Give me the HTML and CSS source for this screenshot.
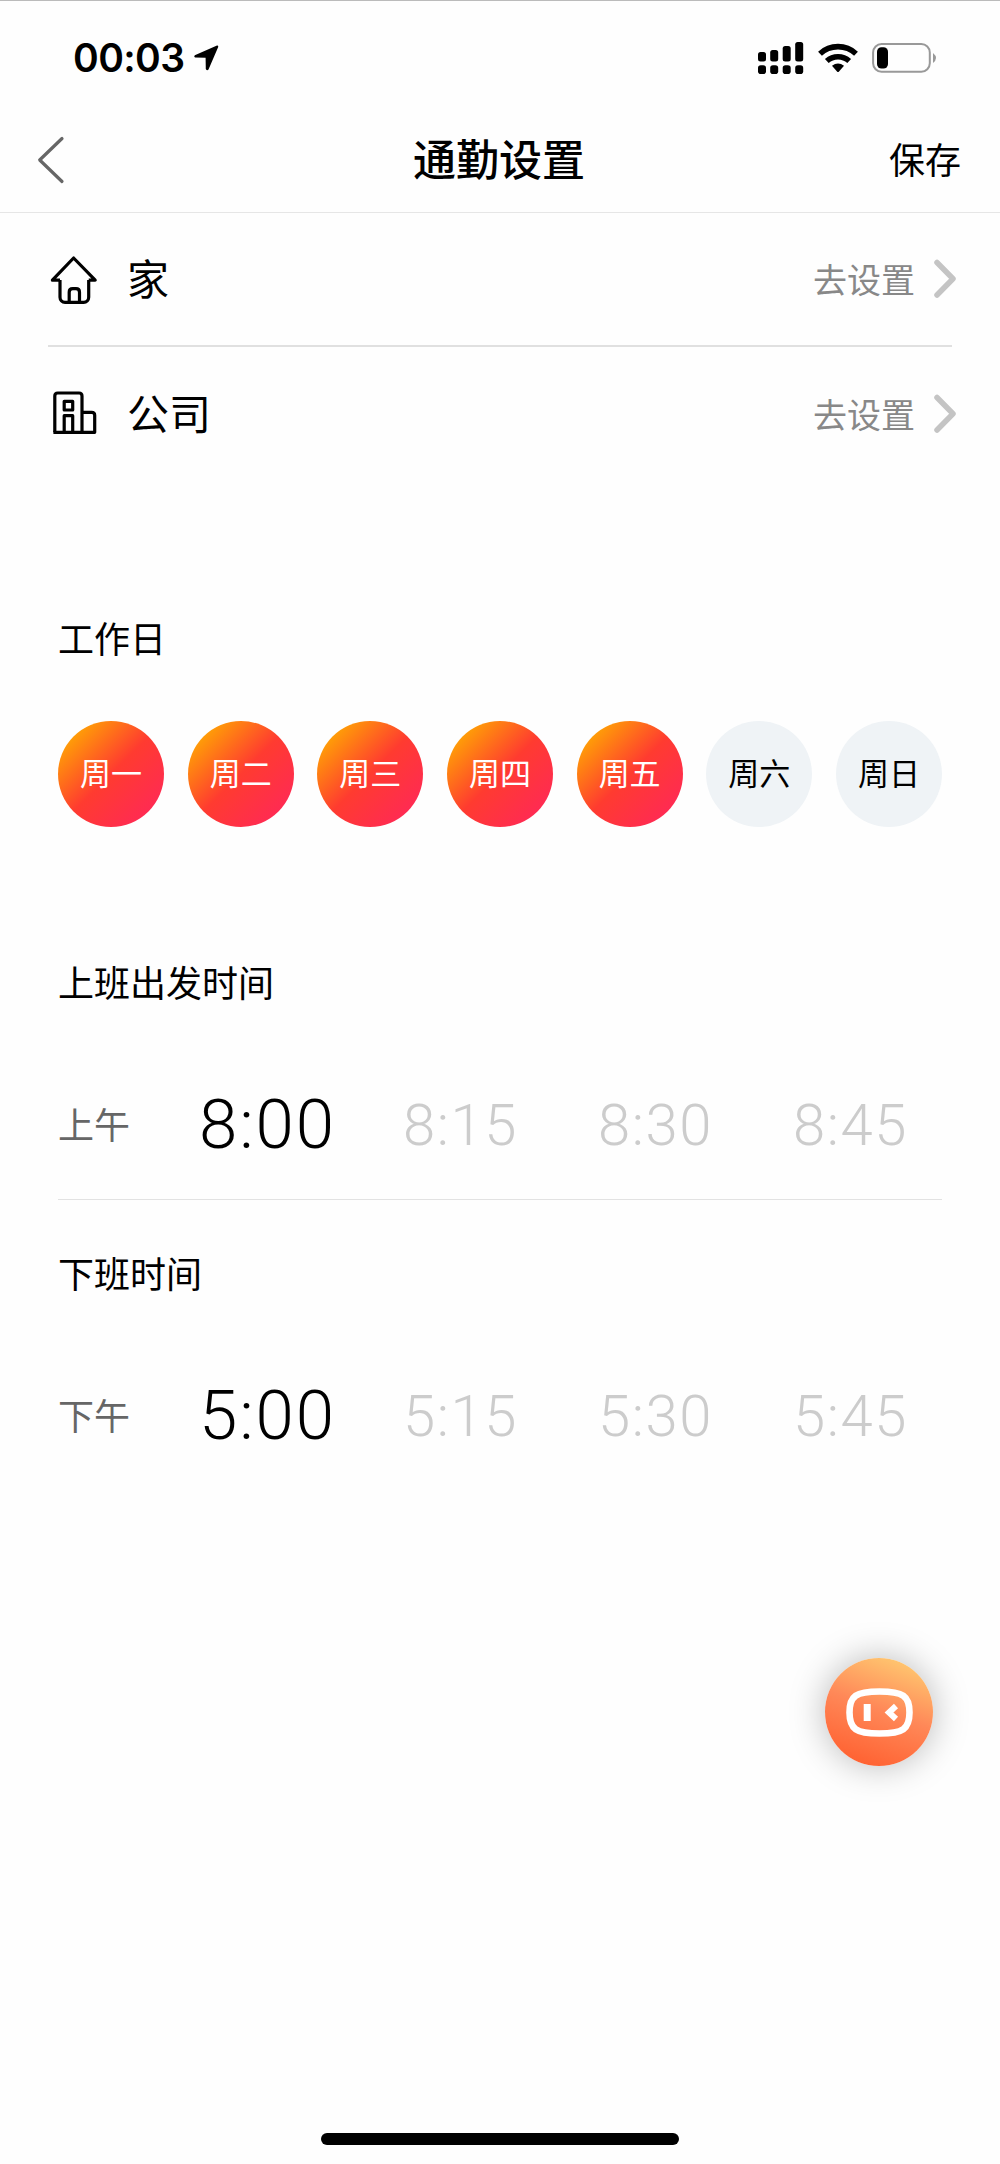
FILE: index.html
```
<!DOCTYPE html>
<html lang="zh-CN">
   <head>
      <meta charset="utf-8" />
      <title>通勤设置</title>
      <link rel="stylesheet" href="styles.css">
   </head>
   <body>
      <div class="status">
         <span class="clock">00:03</span>
         <svg class="location" width="26" height="28" viewBox="0 0 26 28"><path d="M24 1.5L1.8 11.2Q.5 12.5 2 13.6L12.6 13.8 12.8 25Q14 27.2 15.5 25.6L25.2 3Q25.5 1 24 1.5Z"/></svg>
         <svg class="signals" width="182" height="40" viewBox="0 0 182 40">
            <rect x="2" y="14" width="8" height="9.5" rx="2.5"/>
            <rect x="14.2" y="12" width="8" height="11.5" rx="2.5"/>
            <rect x="26.7" y="8" width="8" height="15.5" rx="2.5"/>
            <rect x="39.2" y="4" width="8" height="19.5" rx="2.5"/>
            <rect x="2" y="27.3" width="8" height="8.7" rx="2.8"/>
            <rect x="14.2" y="27.3" width="8" height="8.7" rx="2.8"/>
            <rect x="26.7" y="27.3" width="8" height="8.7" rx="2.8"/>
            <rect x="39.2" y="27.3" width="8" height="8.7" rx="2.8"/>
            <g fill="none" stroke="#000" stroke-width="5.6">
               <path d="M64 15.7A26.3 26.3 0 0 1 100 15.7"/>
               <path d="M70.8 23A16.8 16.8 0 0 1 93.2 23"/>
            </g>
            <path d="M76 27.8Q82 23.2 88 27.8L83 33.4Q82 34.5 81 33.4Z"/>
            <rect x="117.1" y="6" width="56.7" height="27.8" rx="8.5" fill="none" stroke="#999" stroke-width="2"/>
            <rect x="121" y="9.2" width="11" height="21.3" rx="4.5"/>
            <path d="M177 15Q183 20 177 25Z" fill="#999"/>
         </svg>
      </div>
      <header class="nav">
         <svg class="back" width="28" height="50" viewBox="0 0 28 50"><path d="M25 3.5L2.7 25 25 46.5"/></svg>
         <h1>通勤设置</h1>
         <span class="save">保存</span>
      </header>
      <main>
         <div class="place line">
            <svg class="icon" width="52" height="52" viewBox="0 0 52 52">
               <path d="M12 27.2H4.4L25.6 5 47.2 27.2H40.7"/>
               <path d="M12 27V44.3a5 5 0 0 0 5 5H35.7a5 5 0 0 0 5-5V27"/>
               <path d="M21.2 49V39.2q0-3.5 3.5-3.5h3.3q3.5 0 3.5 3.5V49"/>
            </svg>
            <span class="name">家</span>
            <span class="go">去设置</span>
            <svg class="arrow" width="24" height="42" viewBox="0 0 24 42"><path d="M4 4.5L20 20.8 4 37"/></svg>
         </div>
         <div class="place">
            <svg class="icon" width="52" height="52" viewBox="0 0 52 52">
               <path d="M6.8 44.3V8q0-3 3-3H31q3 0 3 3V44.3"/>
               <path d="M34 24.3h9.7q3 0 3 3V44.3H5.4"/>
               <path d="M16.2 13.3h8.5V22h-8.5z"/>
               <path d="M16.2 44V27.7h8.5V44"/>
            </svg>
            <span class="name">公司</span>
            <span class="go">去设置</span>
            <svg class="arrow" width="24" height="42" viewBox="0 0 24 42"><path d="M4 4.5L20 20.8 4 37"/></svg>
         </div>
         <section class="workdays">
            <h2>工作日</h2>
            <div class="days">
               <span class="day on">周一</span>
               <span class="day on">周二</span>
               <span class="day on">周三</span>
               <span class="day on">周四</span>
               <span class="day on">周五</span>
               <span class="day">周六</span>
               <span class="day">周日</span>
            </div>
         </section>
         <section class="leave line">
            <h2>上班出发时间</h2>
            <div class="times">
               <span class="half">上午</span>
               <span class="time now">8:00</span>
               <span class="time">8:15</span>
               <span class="time">8:30</span>
               <span class="time">8:45</span>
            </div>
         </section>
         <section class="off">
            <h2>下班时间</h2>
            <div class="times">
               <span class="half">下午</span>
               <span class="time now">5:00</span>
               <span class="time">5:15</span>
               <span class="time">5:30</span>
               <span class="time">5:45</span>
            </div>
         </section>
      </main>
      <div class="robot">
         <svg width="108" height="108" viewBox="0 0 108 108">
            <path d="M54.5 33.5C78 33.5 84.5 38 84.5 54.5S78 75.5 54.5 75.5 24.5 71 24.5 54.5 31 33.5 54.5 33.5Z" fill="none" stroke="#fff" stroke-width="6.6"/>
            <path d="M38.7 46h7v17h-7z" fill="#fff"/>
            <path d="M71 48L64 54.5 71 61" fill="none" stroke="#fff" stroke-width="6"/>
         </svg>
      </div>
      <div class="homebar"></div>
   </body>
</html>
```
FILE: styles.css
```
* {box-sizing: border-box;}
body {
   position: relative;
   width: 1000px;
   height: 2164px;
   margin: 0;
   overflow: hidden;
   background: #fefefe;
   color: #000;
   font-family: "Liberation Sans", "Noto Sans CJK SC", sans-serif;
}
svg {display: block; flex: none;}
h1, h2 {margin: 0; font-weight: 400;}

.status {
   display: flex;
   align-items: center;
   height: 114px;
   padding: 0 62px 0 73px;
   border-top: 1px solid #bbb;
}
.clock {font: 600 39px/40px Inter, sans-serif; letter-spacing: -.6px;}
.location {margin-left: 9px;}
.signals {margin-left: auto;}

.nav {
   display: grid;
   grid-template-columns: 1fr auto 1fr;
   align-items: center;
   height: 99px;
   padding: 0 39px 6px 37px;
   border-bottom: 1px solid #e6e6e6;
}
.back path {fill: none; stroke: #666; stroke-width: 3.2; stroke-linecap: round; stroke-linejoin: round;}
.nav h1 {padding-top: 2px; font-size: 43px; font-weight: 500; line-height: 60px;}
.save {justify-self: end; padding-top: 4px; font-size: 36px; line-height: 60px;}

.place {
   display: flex;
   align-items: center;
   height: 134px;
   margin: 0 43px 0 48px;
}
.place.line {
   border-bottom: 2px solid #e0e0e0;
   margin-right: 48px;
}
.place.line .arrow {margin-right: -5px;}
.icon path {fill: none; stroke: #000; stroke-width: 3.2; stroke-linejoin: round;}
.name {margin-left: 27px; padding-bottom: 5px; font-size: 42px;}
.go {margin-left: auto; padding-bottom: 2px; font-size: 34px; color: #888;}
.arrow {margin-left: 18px;}
.arrow path {fill: none; stroke: #c4c4c4; stroke-width: 5.5; stroke-linecap: round; stroke-linejoin: round;}

section {margin: 0 58px;}
h2 {padding-top: 2px; font-size: 36px; line-height: 50px;}
.workdays {padding-top: 133px;}
.days {
   display: flex;
   justify-content: space-between;
   margin-top: 55px;
}
.day {
   width: 106px;
   height: 106px;
   border-radius: 50%;
   background: #eff3f6;
   font-size: 31px;
   line-height: 108px;
   text-align: center;
}
.day.on {
   background: linear-gradient(135deg, #ffae00 8%, #ff3b30 50%, #ff2858 92%);
   color: #fff;
}

.leave {padding-top: 131px;}
.leave.line {padding-bottom: 25px; border-bottom: 1px solid #e2e2e2;}
.off {padding-top: 49px;}
.times {
   display: grid;
   grid-template-columns: 141px 204px 195px 195px auto;
   align-items: center;
   height: 100px;
   margin-top: 64px;
}
.half {padding-bottom: 5px; font-size: 36px; color: #666;}
.time {font: 300 58px/102px Roboto, "Liberation Sans", sans-serif; letter-spacing: 1.6px; color: #ccc;}
.time.now {font-size: 69px; letter-spacing: 1.9px; color: #000;}

.robot {
   position: absolute;
   left: 825px;
   top: 1658px;
   border-radius: 50%;
   background: linear-gradient(200deg, #ffc870 8%, #ff8858 48%, #ff6030 92%);
   box-shadow: 0 0 36px rgba(0, 0, 0, .28);
}
.homebar {
   position: absolute;
   left: 321px;
   bottom: 19px;
   width: 358px;
   height: 12px;
   border-radius: 6px;
   background: #000;
}
```
